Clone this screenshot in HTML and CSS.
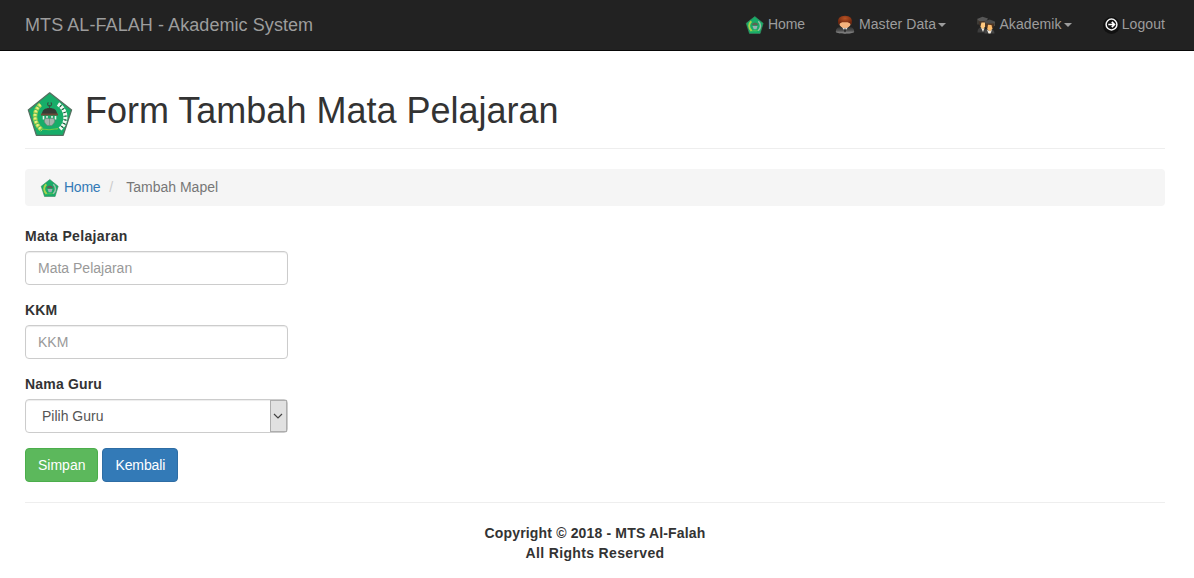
FILE: index.html
```
<!DOCTYPE html>
<html lang="id">
<head>
<meta charset="utf-8">
<title>Form Tambah Mata Pelajaran</title>
<link rel="stylesheet" href="styles.css">
</head>
<body>
<svg class="sprite" aria-hidden="true">
  <symbol id="emblem" viewBox="0 0 50 50">
    <path d="M24.700 3.800 46.600 20.900 38.200 46.300H11.400L3.300 20.900Z" fill="#17ad69" stroke="#566f60" stroke-width="1.300" stroke-linejoin="round"/>
    <path d="M15.500 15.500C8 22 8 34 17 41" fill="none" stroke="#a9d04a" stroke-width="4.500" stroke-dasharray="3 .6"/>
    <path d="M15.500 15.500C8 22 8 34 17 41" fill="none" stroke="#e9ef85" stroke-width="2.500" stroke-dasharray="2 1.600"/>
    <path d="M33 15C42 21 43 33 35 40" fill="none" stroke="#f3f8f3" stroke-width="4" stroke-dasharray="2.800 1"/>
    <path d="M33 15C42 21 43 33 35 40" fill="none" stroke="#30483a" stroke-width="2" stroke-dasharray="1 2.800" stroke-dashoffset="1"/>
    <path d="M23.500 13.500a2 2 0 1 0 2.200 0M24.500 16v3" fill="none" stroke="#355442" stroke-width="1.100"/>
    <path d="M17 25c0-4 3-6 7.500-6s7.500 2 7.500 6Z" fill="#353c35"/>
    <path d="M16 25.500h17" stroke="#6a4938" stroke-width="2"/>
    <path d="M18.500 27v3.500M22 27v2M27 27v2M30.500 27v3.500" stroke="#e8f2ea" stroke-width="1.600"/>
    <path d="M24.500 30c-3-2-6 0-5 3 1 2 2 3 3 3.500h4c1-.5 2-1.500 3-3.500 1-3-2-5-5-3Z" fill="#a5b4ad" stroke="#71837a" stroke-width=".7"/>
    <path d="M24.500 30v6" stroke="#7d8d85" stroke-width=".8"/>
    <path d="M17 40.500c4-1 6 1 9 0 3-1 5 0 7-1" fill="none" stroke="#72cb49" stroke-width="1.200"/>
  </symbol>
  <symbol id="emblem-small" viewBox="0 0 20 20">
    <path d="M9.800 1.500 18.200 8.300 15.100 18.500H4.500L1.200 8.300Z" fill="#17ac68" stroke="#3c8962" stroke-width=".6"/>
    <path d="M6.300 6.200C3.300 9 3.500 13 6.600 16" fill="none" stroke="#a9d44c" stroke-width="1.900"/>
    <path d="M13.300 6.200C16.300 9 16.200 13 13.200 15.700" fill="none" stroke="#9bbfa9" stroke-width="1.500"/>
    <path d="M6.800 10.300c0-3.600 6.300-3.600 6.300 0Z" fill="#5d6354"/>
    <path d="M7.500 11h5l-1 3.300H8.700Z" fill="#9aafb0"/>
    <path d="M7 16c2-.8 4 .4 6-.6" fill="none" stroke="#65c853" stroke-width=".8"/>
  </symbol>
</svg>

<nav class="navbar">
  <div class="container navbar-inner">
    <a class="brand">MTS AL-FALAH - Akademic System</a>
    <ul class="nav">
      <li><a class="nav-home"><svg class="icon"><use href="#emblem-small"/></svg>Home</a></li>
      <li><a><svg class="icon" viewBox="0 0 20 20">
        <defs>
          <linearGradient id="coat" x1="0" y1="0" x2="0" y2="1"><stop offset="0" stop-color="#303030"/><stop offset=".5" stop-color="#4d4d4d"/><stop offset="1" stop-color="#929292"/></linearGradient>
          <radialGradient id="hair" cx=".5" cy=".3" r=".6"><stop offset="0" stop-color="#b95324"/><stop offset="1" stop-color="#70270f"/></radialGradient>
        </defs>
        <path d="M.8 17c0-3.500 1.700-5 5-5h8.400c3.300 0 5 1.500 5 5-2 2.200-16.400 2.200-18.400 0Z" fill="url(#coat)"/>
        <path d="M7 12.300h6l-3 4Z" fill="#e7e7e7"/>
        <path d="M9.500 13.500h1l.5 2.500-1 1.500-1-1.500Z" fill="#222"/>
        <ellipse cx="10" cy="8.700" rx="5.600" ry="4.300" fill="#f6b37d"/>
        <path d="M3.500 9.500C1.800 3.500 5 .8 10 .8s8.200 2.700 6.500 8.700L15.500 9C14.500 7.300 12 7 10 7.300 7.500 7 5.500 7.300 4.500 9Z" fill="url(#hair)"/>
      </svg> Master Data<span class="caret"></span></a></li>
      <li><a><svg class="icon" viewBox="0 0 20 20">
        <path d="M1.500 17.500c0-3 1-5 4-5s5 2 5 5Z" fill="#3d3d3d"/>
        <path d="M4.200 6h5v5.500L7 14.500 4.500 12Z" fill="#ffc87e"/>
        <path d="m5 12.500 2 1.500 1.500-1L7 17Z" fill="#f5efe4"/>
        <path d="M3 5h7.500v4.500L9 7.500H5.500L4.500 11 3.200 10Z" fill="#46362b"/>
        <path d="m1 4 5.500-2.200L12 3.500l-1.500 2.300-7 .4Z" fill="#575757"/>
        <path d="M2 4.500v5" stroke="#807567" stroke-width=".6"/>
        <path d="M8.500 18.500c0-3.500 1.700-5 4.500-5s5.500 1.500 5.500 5Z" fill="#454545"/>
        <path d="M11 8.500h5.500v5.300L14 16.500l-2.700-2.300Z" fill="#ffbd6c"/>
        <path d="m11 14.800 3 1.400 2-1.500-1.500 3.800h-2Z" fill="#f6eee0"/>
        <path d="M9.500 8h8v4.500l-1.300.5-.7-3-3.500-.2-.7 3.400L9.500 12Z" fill="#513520"/>
        <path d="m8.500 6.200 5.200-1.700 5.300 2-1.300 2H9.500Z" fill="#4c4c4c"/>
        <path d="M18.300 7v4" stroke="#807567" stroke-width=".6"/>
      </svg> Akademik<span class="caret"></span></a></li>
      <li><a><svg class="icon" viewBox="0 0 20 20">
        <circle cx="9.500" cy="10.500" r="8.500" fill="#111"/>
        <circle cx="9.500" cy="9.500" r="5.400" fill="none" stroke="#f4f4f4" stroke-width="1.500"/>
        <path d="M6.300 9.500H12M9.800 6.900l2.600 2.600-2.600 2.600" fill="none" stroke="#fff" stroke-width="1.700"/>
      </svg>Logout</a></li>
    </ul>
  </div>
</nav>

<main class="container">
  <header class="page-header">
    <h1><svg class="logo"><use href="#emblem"/></svg> <span class="title">Form Tambah Mata Pelajaran</span></h1>
  </header>
  <ol class="breadcrumb">
    <li class="crumb"><svg class="icon"><use href="#emblem-small"/></svg><a>Home</a></li>
    <li class="active">Tambah Mapel</li>
  </ol>
  <form class="form">
    <div class="form-group">
      <label class="wide" for="mapel">Mata Pelajaran</label>
      <input id="mapel" class="control" type="text" placeholder="Mata Pelajaran">
    </div>
    <div class="form-group">
      <label for="kkm">KKM</label>
      <input id="kkm" class="control" type="text" placeholder="KKM">
    </div>
    <div class="form-group">
      <label>Nama Guru</label>
      <div class="control select" role="combobox">
        <span class="select-value">Pilih Guru</span>
        <span class="select-button"><svg viewBox="0 0 10 6"><path d="m1 1 4 4 4-4" fill="none" stroke="#444" stroke-width="1.200"/></svg></span>
      </div>
    </div>
    <div class="actions">
      <button class="btn btn-success" type="button">Simpan</button>
      <button class="btn btn-primary" type="button">Kembali</button>
    </div>
  </form>
  <footer class="footer">Copyright © 2018 - MTS Al-Falah<br><span class="rights">All Rights Reserved</span></footer>
</main>
</body>
</html>
```
FILE: styles.css
```
* { box-sizing: border-box; }
body {
  margin: 0;
  background: #fff;
  color: #333;
  font: 14px/20px "Liberation Sans", Arial, sans-serif;
}
.sprite { display: none; }
.container {
  width: 1170px;
  margin-left: 10px;
  padding: 0 15px;
}
.navbar {
  height: 51px;
  background: #222;
  border-bottom: 1px solid #080808;
}
.navbar-inner {
  display: flex;
  justify-content: space-between;
  padding-right: 0;
}
.brand {
  padding: 15px 0;
  color: #9d9d9d;
  font-size: 18px;
  letter-spacing: .07px;
}
.nav {
  display: flex;
  margin: 0;
  padding: 0;
  list-style: none;
}
.nav a {
  display: block;
  height: 50px;
  padding: 14px 15px;
  color: #9d9d9d;
  letter-spacing: .09px;
  white-space: nowrap;
}
.nav .nav-home { letter-spacing: -.1px; }
.nav-home .icon { margin-right: 3px; }
.icon {
  width: 20px;
  height: 20px;
  vertical-align: middle;
}
.caret {
  display: inline-block;
  margin-left: 2px;
  vertical-align: middle;
  border-top: 4px solid;
  border-right: 4px solid transparent;
  border-left: 4px solid transparent;
}
.page-header {
  margin-top: 38px;
  padding-bottom: 9px;
  border-bottom: 1px solid #eee;
}
.page-header h1 {
  display: flex;
  gap: 10px;
  height: 50px;
  margin: 0;
  font-size: 36px;
  font-weight: 500;
  line-height: 40px;
}
.title { padding-top: 2px; }
.logo {
  width: 50px;
  height: 50px;
}
.breadcrumb {
  display: flex;
  align-items: center;
  height: 37px;
  margin: 20px 0;
  padding: 0 15px;
  border-radius: 4px;
  background: #f5f5f5;
  list-style: none;
}
.crumb {
  display: flex;
  align-items: center;
  gap: 4px;
}
.breadcrumb a {
  padding-bottom: 1px;
  color: #337ab7;
  letter-spacing: -.25px;
}
.breadcrumb .active {
  padding-bottom: 1px;
  color: #777;
}
.breadcrumb .active::before {
  content: "/";
  padding: 0 13px 0 9px;
  color: #ccc;
}
.form { width: 263px; }
.form-group { margin-bottom: 15px; }
.form-group label {
  display: block;
  margin-bottom: 5px;
  font-weight: 700;
  letter-spacing: .18px;
}
.form-group .wide { letter-spacing: .33px; }
.control {
  display: block;
  width: 100%;
  height: 34px;
  padding: 6px 12px;
  border: 1px solid #ccc;
  border-radius: 4px;
  background: #fff;
  box-shadow: inset 0 1px 1px rgba(0, 0, 0, .075);
  color: #555;
  font: inherit;
}
.control::placeholder { color: #999; opacity: 1; }
.select {
  display: flex;
  justify-content: space-between;
  padding: 0 0 0 16px;
  line-height: 32px;
}
.select-button {
  display: flex;
  align-items: center;
  justify-content: center;
  width: 17px;
  padding-right: 1px;
  border: 1px solid #adadad;
  background: #e1e1e1;
}
.select-button svg { width: 10px; height: 6px; }
.actions { display: flex; gap: 4px; }
.btn {
  height: 34px;
  padding: 6px 12px;
  border: 1px solid;
  border-radius: 4px;
  color: #fff;
  font: inherit;
}
.btn-success { background: #5cb85c; border-color: #4cae4c; }
.btn-primary {
  background: #337ab7;
  border-color: #2e6da4;
  letter-spacing: -.12px;
}
.footer {
  margin-top: 20px;
  padding-top: 20px;
  border-top: 1px solid #eee;
  font-weight: 700;
  letter-spacing: .16px;
  text-align: center;
}
.rights { letter-spacing: .35px; }
```
